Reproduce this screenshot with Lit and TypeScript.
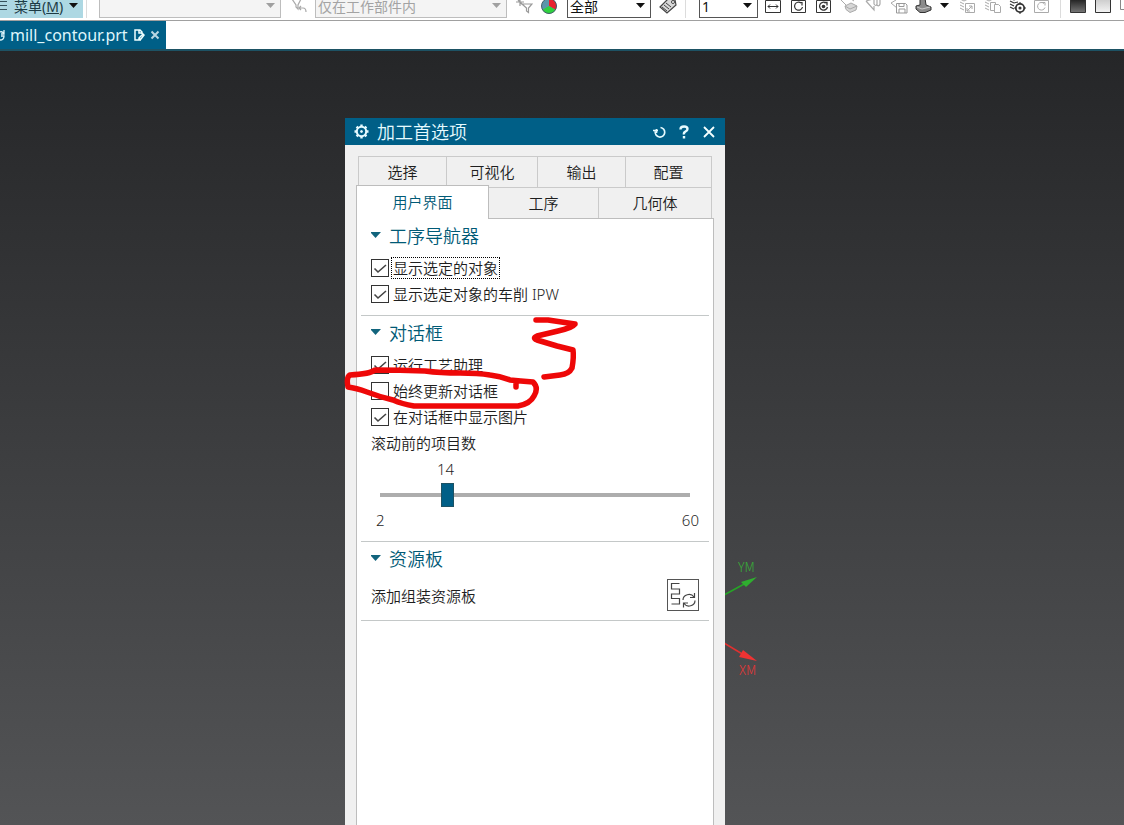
import { LitElement, html, svg, css, nothing } from "lit";
import { customElement, property, state } from "lit/decorators.js";

const base = css`
  *, *::before, *::after { box-sizing: border-box; }
  button, select, input { font: inherit; color: inherit; margin: 0; }
  button { border: 0; background: none; padding: 0; }
  svg { display: block; }
`;

const icons: Record<string, unknown> = {
  filterBack: svg`<g fill="none" stroke="#a9a9a9" stroke-width="1.2"><path d="M3 2h9l-3 6v4l-2-2V8z"/><path d="M12 9l-2 2 2 2M10 11h4q3 0 3 4"/></g>`,
  filterAdd: svg`<g fill="none" stroke="#9a9a9a" stroke-width="1.2"><path d="M7 7h10l-3.500 4v4.500l-2-1.500v-3z"/><path d="M5 1v8M1 5h8M3 3l4 4"/></g>`,
  pie: svg`<circle cx="8" cy="9" r="7.500" fill="#5a97ab"/><path d="M8 9V1.500a7.500 7.500 0 0 1 6.500 11.200z" fill="#e8222f"/><path d="M8 9l6.500 3.700a7.500 7.500 0 0 1-13 0z" fill="#2fd23f"/><circle cx="8" cy="9" r="7.500" fill="none" stroke="#45606a"/>`,
  tag: svg`<path d="M1 10L9 2l7 1 1 5-9 8z" fill="#d8d8d8" stroke="#444" stroke-width="1.200"/><path d="M3 10l5 4M5 8l5 4M7 6l5 4" stroke="#444"/><circle cx="14" cy="5" r="1.500" fill="#fff" stroke="#444"/>`,
  fit: svg`<path d="M.500 3.500h15v12H.500z" fill="#fff" stroke="#333"/><path d="M3 9.500h10M5 7.500l-2 2 2 2M11 7.500l2 2-2 2" fill="none" stroke="#333"/>`,
  rotate: svg`<path d="M1.500 3.500h14v12h-14z" fill="#fff" stroke="#333"/><path d="M11 6a4 4 0 1 0 1.500 4M9 5.500h3v3" fill="none" stroke="#333" stroke-width="1.200"/>`,
  target: svg`<path d="M1.500 3.500h14v12h-14z" fill="#fff" stroke="#333"/><path d="M11 6a4 4 0 1 0 1.500 4M9 5.500h3v3" fill="none" stroke="#333" stroke-width="1.300"/><circle cx="8.500" cy="9.500" r="1.800" fill="#333"/>`,
  layers: svg`<g fill="#d7d7d7" stroke="#aaa"><path d="M1 3l7-3 6 4" fill="none"/><path d="M1 3l5 5" fill="none"/><path d="M5 9l6-3 6 3-1 4-6 2.500-4-3z"/><path d="M5 9l5 3 7-3" fill="none"/></g>`,
  clip: svg`<g fill="none" stroke="#aaa" stroke-width="1.200"><path d="M1 4l8 9v-4M1 4l7-2"/><path d="M9 2v5q2 3 3 0V2M15 2v5q-1 3-3 1"/></g>`,
  save: svg`<path d="M1 6l5-3M1 6l6 5" fill="none" stroke="#aaa"/><path d="M6.500 6.500h9l1.500 1.500v8H6.500z" fill="#fff" stroke="#999"/><path d="M9 6.500v3h5v-3M9 16v-4h6v4" fill="none" stroke="#999"/>`,
  solid: svg`<path d="M5 1h5l1 7 5 2v3l-6 2.500H5L1 12V9l4-1z" fill="#8b8b8b" stroke="#333"/><path d="M2 10l5 2 8-2" fill="none" stroke="#ccc"/>`,
  copyEdit: svg`<g fill="none" stroke="#aaa"><path d="M1 2l4 2 4-2M1 5l4 2M1 8l4 2M1 11l4 2"/><path d="M6.500 6.500h9v9h-9z" fill="#fff"/><path d="M8 14l5-5M10 9h3v3M8 11v3h3"/></g>`,
  pages: svg`<g fill="none" stroke="#aaa"><path d="M1 2l4 2 4-2M1 5l4 2M1 8l4 2M1 11l4 2"/><path d="M6.500 5.500h5v8h-5z" fill="#fff"/><path d="M10.500 7.500h4l2 2v6h-6z" fill="#fff"/></g>`,
  gearList: svg`<g fill="none" stroke="#333" stroke-width="1.100"><path d="M1 1l4 2 5-2M1 4l4 2 4-1M1 7l4 2M1 10l4 2"/><circle cx="11" cy="11" r="4.200" stroke-width="1.800" fill="#fff"/><circle cx="11" cy="11" r="1" fill="#333"/><path d="M11 5v2M11 15v2M5 11h2M15 11h2"/></g>`,
  refresh: svg`<g fill="none" stroke="#aaa"><path d="M.500 3.500h14v12H.500z"/><path d="M10 6.500a3.800 3.800 0 1 0 1 4M8 5.500h3v3"/></g>`,
  dark: svg`<defs><linearGradient id="d" x2="0" y2="1"><stop stop-color="#222"/><stop offset="1" stop-color="#777"/></linearGradient></defs><path d="M.500 2.500h15v13H.500z" fill="url(#d)" stroke="#333"/>`,
  light: svg`<defs><linearGradient id="l" x2="0" y2="1"><stop stop-color="#ccc"/><stop offset="1" stop-color="#f4f4f4"/></linearGradient></defs><path d="M.500 2.500h15v13H.500z" fill="url(#l)" stroke="#333"/>`,
  blank: svg`<path d="M.500 2.500h15v10H.500z" fill="#fff" stroke="#888"/>`,
};

@customElement("tool-bar")
export class ToolBar extends LitElement {
  static styles = [base, css`
    :host { display: block; }
    .bar { display: flex; align-items: flex-end; height: 21px; padding-bottom: 2px; overflow: hidden; background: #fff; border-bottom: 1px solid #a0a0a0; font-size: 14px; color: #111; }
    .group { display: flex; flex: none; align-items: center; gap: 8px; height: 24px; padding: 0 8px 0 12px; border-right: 1px solid #dcdcdc; }
    .group.first { padding: 0 3px 0 0; }
    .group.tight { gap: 7px; padding-left: 13px; }
    .group.last { padding-left: 9px; border: 0; }
    .menu { display: flex; align-items: center; gap: 6px; width: 83px; height: 24px; background: #add8e3; color: #1c3a44; white-space: nowrap; }
    select { appearance: none; height: 24px; padding: 0 20px 0 2px; border: 1px solid #555; border-radius: 0; background: #fff; opacity: 1; }
    select:disabled { border-color: #bdbdbd; background: #f4f4f4; color: #a3a3a3; }
    .pick { position: relative; display: flex; }
    .pick svg { position: absolute; right: 5px; top: 9px; pointer-events: none; }
    .wide { width: 182px; }
    .scope { width: 192px; }
    .short { width: 84px; }
    .tiny { width: 59px; }
    .more { width: 12px; }
  `];

  caret(color = "#111") {
    return html`<svg width="10" height="6" viewBox="0 0 10 6"><path d="M0 0h9L4.500 5z" fill=${color}></path></svg>`;
  }
  tool(name: string, label: string) {
    return html`<button aria-label=${label}><svg width="18" height="18" viewBox="0 0 18 18">${icons[name]}</svg></button>`;
  }
  pick(cls: string, label: string, value: string, disabled = false) {
    return html`<span class="pick"><select class=${cls} aria-label=${label} ?disabled=${disabled}><option>${value}</option></select>${this.caret(disabled ? "#a0a0a0" : "#111")}</span>`;
  }
  render() {
    return html`<div class="bar">
      <div class="group first"><button class="menu">
        <svg width="8" height="12" viewBox="0 0 8 12"><path d="M0 1.500h7M0 5.500h7M0 9.500h7" stroke="#35525c"></path></svg>
        <span>菜单(<u>M</u>)</span>${this.caret()}</button></div>
      <div class="group">
        ${this.pick("wide", "类型", "", true)}${this.tool("filterBack", "重置过滤器")}
        ${this.pick("scope", "范围", "仅在工作部件内", true)}${this.tool("filterAdd", "过滤器")}${this.tool("pie", "颜色")}
        ${this.pick("short", "图层", "全部")}${this.tool("tag", "标签")}
      </div>
      <div class="group tight">
        ${this.pick("tiny", "工作图层", "1")}
        ${this.tool("fit", "适合窗口")}${this.tool("rotate", "旋转")}${this.tool("target", "中心")}${this.tool("layers", "图层")}
        ${this.tool("clip", "剪切")}${this.tool("save", "保存")}${this.tool("solid", "实体")}
        <button class="more" aria-label="更多">${this.caret()}</button>
        ${this.tool("copyEdit", "编辑")}${this.tool("pages", "复制")}${this.tool("gearList", "设置")}${this.tool("refresh", "刷新")}
      </div>
      <div class="group tight last">${this.tool("dark", "深色背景")}${this.tool("light", "浅色背景")}${this.tool("blank", "背景")}</div>
    </div>`;
  }
}

@customElement("file-tabs")
export class FileTabs extends LitElement {
  static styles = [base, css`
    :host { display: block; }
    .strip { display: flex; height: 30px; background: #fff; border-bottom: 2px solid #1d5264; }
    .tab { display: flex; align-items: center; gap: 5px; padding-right: 6px; background: #005f87; color: #dff6fb; font-size: 16px; }
  `];
  render() {
    return html`<div class="strip"><div class="tab">
      <svg width="5" height="14" viewBox="0 0 5 14" fill="none" stroke="#dff6fb" stroke-width="1.300"><path d="M0 4q3-1 4 2M4 2v4H1M0 12q4 0 4-4H1"></path></svg>
      <span>mill_contour.prt</span>
      <svg width="12" height="14" viewBox="0 0 12 14" fill="none" stroke="#f0ffff" stroke-width="1.500"><path d="M9 6V4L7 2H2v10h6M6 2v3h3M6 10l4-4 1 1-3 4H6z"></path></svg>
      <button aria-label="关闭"><svg width="10" height="10" viewBox="0 0 10 10"><path d="M1.500 1.500l7 7M8.500 1.500l-7 7" stroke="#b9d6e2" stroke-width="2"></path></svg></button>
    </div></div>`;
  }
}

@customElement("pref-section")
export class PrefSection extends LitElement {
  @property() heading = "";
  @state() open = true;
  static styles = [base, css`
    :host { display: block; margin: 0 4px; padding: 0 10px 8px; border-bottom: 1px solid #c4c8c8; }
    .head { display: flex; align-items: center; gap: 6px; width: 100%; height: 34px; padding-bottom: 2px; margin-bottom: 2px; color: #005a76; font-size: 18px; font-weight: 350; }
    h2 { margin: 0; font: inherit; }
  `];
  render() {
    return html`<h2><button class="head" aria-expanded=${this.open} @click=${() => (this.open = !this.open)}>
      <svg width="12" height="6" viewBox="0 0 12 6"><path d="M-1 0h11L4.500 6z" fill="#12647d"></path></svg>${this.heading}</button></h2>
      ${this.open ? html`<slot></slot>` : nothing}`;
  }
}

@customElement("preferences-dialog")
export class PreferencesDialog extends LitElement {
  @state() count = 14;
  static styles = [base, css`
    :host { display: flex; flex-direction: column; background: #f0f0f0; color: #1e1e1e; font-size: 15px; font-weight: 350; }
    .title { display: flex; align-items: center; height: 27px; padding: 0 9px; gap: 8px; background: #005f87; color: #e6fbff; }
    h1 { flex: 1; margin: 0; font-size: 18px; font-weight: 350; line-height: 26px; }
    .title-actions { display: flex; align-items: center; gap: 11px; }
    .body { flex: 1; display: flex; flex-direction: column; padding: 11px 11px 0; }
    .row { display: grid; height: 31px; }
    .row.back { grid-template-columns: 88fr 91fr 88fr 87fr; margin: 0 2px; }
    .row.front { grid-template-columns: 133fr 109fr 114fr; margin-right: 2px; }
    .tab { padding-bottom: 2px; border: 1px solid #cacaca; border-width: 1px 0 0 1px; }
    .tab:last-child { border-right-width: 1px; }
    .tab.active { position: relative; margin: -2px 0 -1px; border: 1px solid #bdbdbd; border-bottom: 0; background: #fff; color: #005a76; }
    .tab.active + .tab { border-left: 0; }
    .panel { flex: 1; border: 1px solid #bdbdbd; border-bottom: 0; background: #fff; }
    .check { display: flex; align-items: center; gap: 2px; height: 26px; }
    .check input { appearance: none; width: 18px; height: 18px; border: 1px solid #333; background: #fff; }
    .check input:checked { background: #fff url("data:image/svg+xml,%3Csvg xmlns='http://www.w3.org/2000/svg' viewBox='0 0 16 16'%3E%3Cpath d='M2.500 8.500l3.500 3.500 8-7' fill='none' stroke='%23444' stroke-width='1.600'/%3E%3C/svg%3E"); }
    .check span { height: 22px; padding: 0 1px; border: 1px solid transparent; line-height: 20px; white-space: nowrap; }
    .check.focus span { border: 1px dotted #000; }
    .line { display: block; height: 26px; line-height: 26px; }
    .slider { margin: 0 9px; }
    .value { width: 22px; text-align: center; }
    .slider input { appearance: none; display: block; width: 100%; height: 26px; background: linear-gradient(#adadad, #adadad) center / 100% 4px no-repeat; }
    .slider input::-webkit-slider-thumb { appearance: none; width: 13px; height: 24px; border: 1px solid #1d5264; background: #005f87; }
    .ends { display: flex; justify-content: space-between; height: 25px; padding: 0 0 0 5px; line-height: 24px; }
    .add { display: flex; align-items: center; justify-content: space-between; height: 34px; }
    .add button { width: 32px; height: 32px; border: 1px solid #555; background: #fff; }
  `];

  check(text: string, checked: boolean, focus = false) {
    return html`<label class="check ${focus ? "focus" : ""}"><input type="checkbox" .checked=${checked}><span>${text}</span></label>`;
  }
  tab(text: string, active = false) {
    return html`<button role="tab" class="tab ${active ? "active" : ""}" aria-selected=${active}>${text}</button>`;
  }
  render() {
    const part = (this.count - 2) / 58;
    return html`
      <header class="title">
        <svg width="15" height="15" viewBox="0 0 15 15" fill="none" stroke="#e6fbff"><circle cx="7.500" cy="7.500" r="4.700" stroke-width="2"></circle><circle cx="7.500" cy="7.500" r="1" fill="#e6fbff"></circle><path d="M7.500 .500v2.500M7.500 12v2.500M.500 7.500H3M12 7.500h2.500M2.600 2.600l1.700 1.700M10.700 10.700l1.700 1.700M2.600 12.400l1.700-1.700M10.700 4.300l1.700-1.700" stroke-width="2.400"></path></svg>
        <h1>加工首选项</h1>
        <div class="title-actions">
          <button aria-label="重置"><svg width="14" height="14" viewBox="0 0 14 14" fill="none" stroke="#e6fbff" stroke-width="1.700"><path d="M8.500 2.500a4.800 4.800 0 1 1-5.300 4M1 5.500h5M4.500 4v4"></path></svg></button>
          <button aria-label="帮助"><svg width="14" height="14" viewBox="0 0 14 14" fill="none" stroke="#e6fbff" stroke-width="2.400"><path d="M3.500 4.500q0-3 3.500-3t3.500 2.500q0 1.500-2 2.500T7 9.500M7 11v2.500"></path></svg></button>
          <button aria-label="关闭"><svg width="14" height="14" viewBox="0 0 14 14"><path d="M2 2l10 10M12 2L2 12" stroke="#f4ffff" stroke-width="1.800"></path></svg></button>
        </div>
      </header>
      <div class="body">
        <div class="row back">${this.tab("选择")}${this.tab("可视化")}${this.tab("输出")}${this.tab("配置")}</div>
        <div class="row front">${this.tab("用户界面", true)}${this.tab("工序")}${this.tab("几何体")}</div>
        <div class="panel">
          <pref-section heading="工序导航器">
            ${this.check("显示选定的对象", true, true)}
            ${this.check("显示选定对象的车削 IPW", true)}
          </pref-section>
          <pref-section heading="对话框">
            ${this.check("运行工艺助理", true)}
            ${this.check("始终更新对话框", false)}
            ${this.check("在对话框中显示图片", true)}
            <label class="line" for="count">滚动前的项目数</label>
            <div class="slider">
              <output class="line value" for="count" style="margin-left: calc((100% - 22px) * ${part} - 5px)">${this.count}</output>
              <input id="count" type="range" min="2" max="60" .value=${String(this.count)}
                @input=${(e: Event) => (this.count = Number((e.target as HTMLInputElement).value))}>
            </div>
            <div class="ends"><span>2</span><span>60</span></div>
          </pref-section>
          <pref-section heading="资源板">
            <div class="add"><span id="add">添加组装资源板</span>
              <button aria-labelledby="add"><svg width="30" height="30" viewBox="0 0 30 30" fill="none" stroke="#444" stroke-width="1.200"><path d="M11.500 3.500H3.500v5.500h8v5H3.500M3.500 13.500v5h8v5.500H3.500"></path><path d="M15 20a6 5.500 0 0 1 11-3M26.500 13v4.500H22M27 20.500a6 5.500 0 0 1-11 3M15.500 27.500V23H20"></path></svg></button>
            </div>
          </pref-section>
        </div>
      </div>`;
  }
}

@customElement("app-root")
export class AppRoot extends LitElement {
  static styles = [base, css`
    :host { display: flex; flex-direction: column; height: 100vh; overflow: hidden; font-family: "Noto Sans", "Noto Sans CJK SC", sans-serif; }
    .stage { position: relative; flex: 1; background: linear-gradient(#252628, #535456); }
    .axes { position: absolute; left: 720px; top: 504px; font-family: "Noto Sans CJK SC", sans-serif; }
    .dialog { position: absolute; left: 345px; top: 67px; bottom: 0; width: 380px; }
    .ink { position: absolute; left: 340px; top: 259px; pointer-events: none; }
  `];
  render() {
    return html`
      <tool-bar></tool-bar>
      <file-tabs></file-tabs>
      <main class="stage">
        <svg class="axes" width="50" height="130" viewBox="720 555 50 130" font-size="13" font-weight="300">
          <path d="M724 595L746 583" stroke="#26a526" stroke-width="1.500"></path><path d="M757 577l-11 10-5-5z" fill="#2fae2f"></path>
          <path d="M724 643L744 655" stroke="#e03030" stroke-width="1.500"></path><path d="M757 661l-18-4 4-7z" fill="#ee3333"></path>
          <text x="738" y="572" fill="#38b038">YM</text><text x="739" y="675" fill="#e83636">XM</text>
        </svg>
        <preferences-dialog class="dialog"></preferences-dialog>
        <svg class="ink" width="250" height="110" viewBox="340 310 250 110" fill="none" stroke="#ee0808" stroke-width="5.500" stroke-linecap="round" stroke-linejoin="round">
          <path d="M350 375Q346 377 348 387Q356 388 367 392Q380 397 393 400Q402 404 414 406H473H518Q530 404 534 396Q539 388 533 382Q520 381 510 380Q500 376 490 375Q478 373 460 373Q440 373 425 371Q400 370 375 370Q370 374 350 375M516 383V387"></path>
          <path d="M536 320H548L575 324Q572 328 558 331L537 336Q532 338 537 340L557 346L573 350Q574 357 572 368Q569 374 560 375L544 377"></path>
        </svg>
      </main>`;
  }
}
